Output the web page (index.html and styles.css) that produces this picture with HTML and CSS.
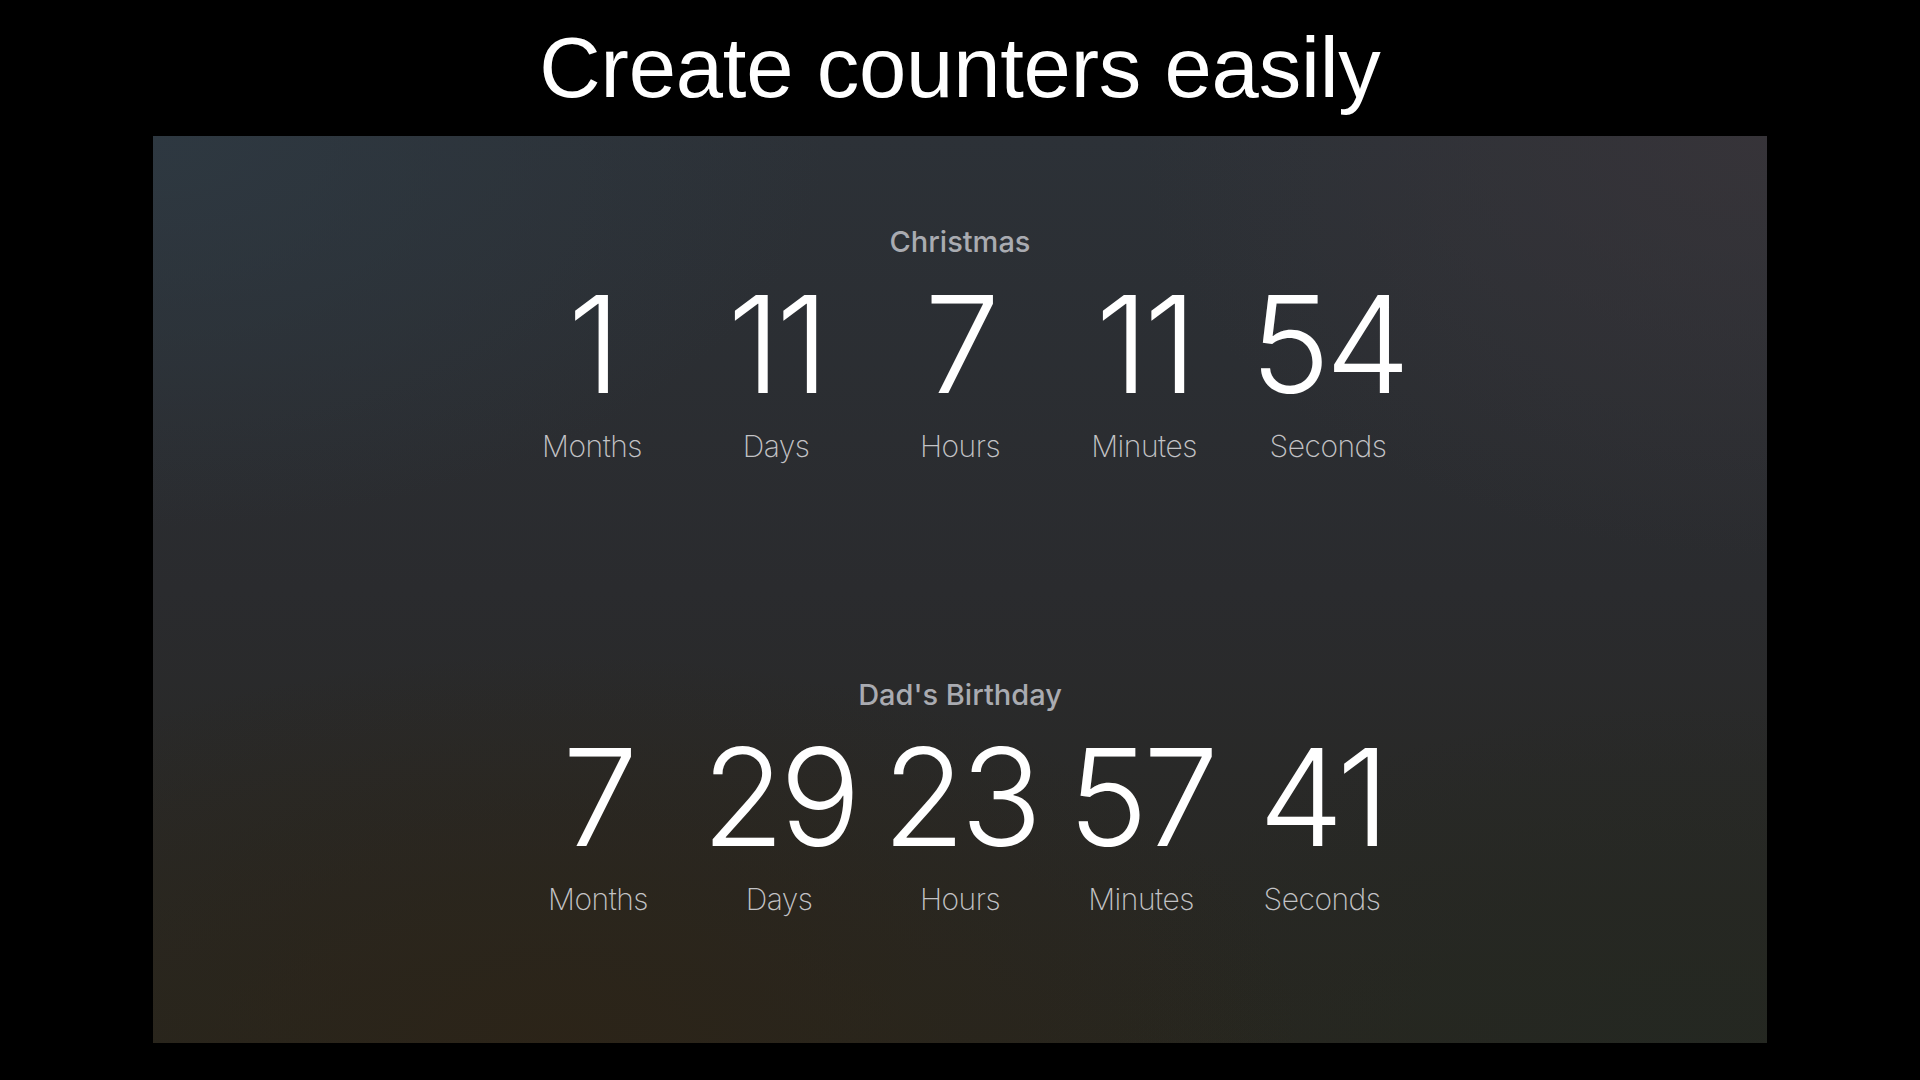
FILE: index.html
```html
<!DOCTYPE html>
<html lang="en">
<head>
<meta charset="utf-8">
<title>Create counters easily</title>
<link rel="stylesheet" href="styles.css">
</head>
<body>
<header class="headline">Create counters easily</header>
<main class="screen">
  <section class="counter">
    <h2 class="counter-title">Christmas</h2>
    <div class="units units-a">
      <div class="unit"><div class="value">1</div><div class="label">Months</div></div>
      <div class="unit"><div class="value">11</div><div class="label">Days</div></div>
      <div class="unit"><div class="value">7</div><div class="label">Hours</div></div>
      <div class="unit"><div class="value">11</div><div class="label">Minutes</div></div>
      <div class="unit"><div class="value">54</div><div class="label">Seconds</div></div>
    </div>
  </section>
  <section class="counter counter-second">
    <h2 class="counter-title">Dad's Birthday</h2>
    <div class="units units-b">
      <div class="unit"><div class="value">7</div><div class="label">Months</div></div>
      <div class="unit"><div class="value">29</div><div class="label">Days</div></div>
      <div class="unit"><div class="value">23</div><div class="label">Hours</div></div>
      <div class="unit"><div class="value">57</div><div class="label">Minutes</div></div>
      <div class="unit"><div class="value">41</div><div class="label">Seconds</div></div>
    </div>
  </section>
</main>
</body>
</html>
```
FILE: styles.css
```css
html, body {
  margin: 0;
  padding: 0;
  background: #000;
}

body {
  width: 1920px;
  height: 1080px;
  overflow: hidden;
  font-family: Inter, "Noto Sans", sans-serif;
}

.headline {
  height: 136px;
  line-height: 136px;
  text-align: center;
  color: #fff;
  font-family: "Liberation Sans", Arial, sans-serif;
  font-size: 85px;
  font-weight: 400;
  letter-spacing: -0.2px;
}

.screen {
  width: 1614px;
  height: 907px;
  margin: 0 auto;
  box-sizing: border-box;
  padding-top: 88px;
  display: flex;
  flex-direction: column;
  align-items: center;
  background:
    radial-gradient(ellipse 900px 600px at 100% 0%, rgba(56, 52, 57, 0.85), rgba(56, 52, 57, 0) 70%),
    radial-gradient(ellipse 900px 520px at 0% 0%, rgba(46, 57, 66, 0.9), rgba(46, 57, 66, 0) 75%),
    radial-gradient(ellipse 1000px 520px at 25% 100%, rgba(44, 36, 24, 0.95), rgba(44, 36, 24, 0) 75%),
    radial-gradient(ellipse 800px 450px at 95% 100%, rgba(36, 40, 34, 0.9), rgba(36, 40, 34, 0) 75%),
    linear-gradient(to bottom, #2c3137 0%, #2a2b2e 50%, #27261f 100%);
}

.counter {
  display: flex;
  flex-direction: column;
  align-items: center;
}

.counter-second {
  margin-top: 213px;
}

.counter-title {
  margin: 0;
  font-size: 29px;
  line-height: 36px;
  font-weight: 500;
  color: #a9abb1;
}

.units {
  display: flex;
  margin-top: 14px;
}

.unit {
  display: flex;
  flex-direction: column;
  align-items: center;
}

.units-a .unit {
  width: 184px;
}

.units-b .unit {
  width: 181px;
}

.value {
  font-size: 135px;
  line-height: 140px;
  font-weight: 300;
  color: #fff;
  letter-spacing: -0.035em;
  white-space: nowrap;
}

.label {
  margin-top: 14px;
  font-size: 30px;
  line-height: 36px;
  font-weight: 200;
  color: #c3c3c6;
  letter-spacing: -0.5px;
  white-space: nowrap;
}
```
